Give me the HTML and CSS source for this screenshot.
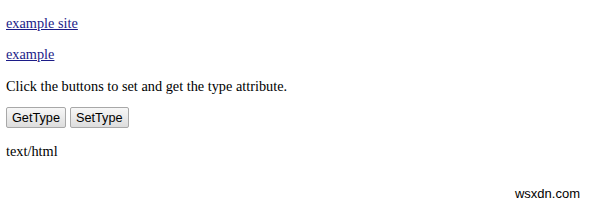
FILE: index.html
```html
<!DOCTYPE html>
<html lang="en">
<head>
    <meta charset="UTF-8">
    <title>type attribute</title>
    <link rel="stylesheet" href="styles.css">
</head>
<body>
    <p><a href="#" id="myid" type="text/html">example site</a></p>
    <p><a href="#">example</a></p>
    <p>Click the buttons to set and get the type attribute.</p>
    <div class="buttons">
        <button>GetType</button>
        <button>SetType</button>
    </div>
    <p id="demo">text/html</p>
    <div class="watermark">wsxdn.com</div>
</body>
</html>
```

FILE: styles.css
```css
body {
    margin: 0;
    padding: 0 6px;
    font-family: "Liberation Serif", "Times New Roman", serif;
    font-size: 14.3px;
    color: #000;
    background: #fff;
}

p {
    margin: 13.5px 0;
    line-height: 18px;
}

a {
    color: #1c1c88;
}

.buttons {
    display: flex;
    gap: 4px;
    margin-top: -1px;
}

.buttons button {
    font-family: "Liberation Sans", Arial, sans-serif;
    font-size: 12.7px;
    height: 21px;
    padding: 0 5px;
    border: 1px solid #a8a8a8;
    border-radius: 2px;
    background: linear-gradient(#f7f7f7, #dddddd);
    color: #000;
}

.watermark {
    text-align: right;
    margin-top: 26px;
    padding-right: 3px;
    font-family: "Liberation Sans", Arial, sans-serif;
    font-size: 13px;
}
```
